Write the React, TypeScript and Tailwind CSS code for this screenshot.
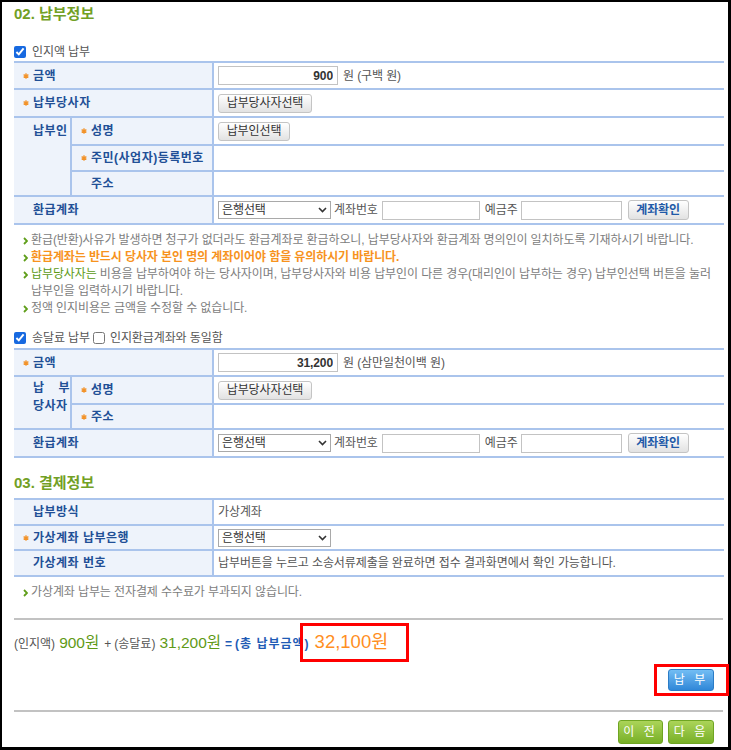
import React from "react";

const line = "border-[#aac4ec]";

function Star() {
  return (
    <svg width="6" height="6" viewBox="0 0 6 6" className="shrink-0">
      <path d="M3 0.3v5.4M0.6 1.6l4.8 2.8M0.6 4.4l4.8-2.8" stroke="#f2932a" strokeWidth="1.3" />
    </svg>
  );
}

function Arrow() {
  return (
    <svg width="5" height="8" viewBox="0 0 5 8" className="mt-[5px] mr-[3px] shrink-0">
      <path d="M1 1l3 3-3 3" fill="none" stroke="#5f9e1a" strokeWidth="1.8" />
    </svg>
  );
}

function Label({ children, star = false, span = false }: { children: React.ReactNode; star?: boolean; span?: boolean }) {
  return (
    <div
      className={`${span ? "col-span-2" : ""} flex items-center border-r-2 border-b-2 ${line} bg-[#eef3fb] pl-[9px] text-[12px] font-bold tracking-[0.5px] text-[#214f96]`}
    >
      <span className="flex w-[10px] items-center">{star && <Star />}</span>
      <span>{children}</span>
    </div>
  );
}

function Value({ children }: { children?: React.ReactNode }) {
  return (
    <div className={`flex items-center border-b-2 ${line} pl-[4px] text-[12px] tracking-[-0.1px] text-[#555]`}>{children}</div>
  );
}

function Amount({ value }: { value: string }) {
  return (
    <input
      readOnly
      value={value}
      className="h-[19px] w-[120px] border border-[#c3c3c3] bg-white px-[4px] text-right text-[12px] font-bold text-[#333] outline-none"
    />
  );
}

function Box({ w }: { w: string }) {
  return <input readOnly className={`${w} h-[19px] border border-[#c3c3c3] bg-white outline-none`} />;
}

function GrayBtn({ children, w, blue = false }: { children: React.ReactNode; w: string; blue?: boolean }) {
  return (
    <button
      type="button"
      className={`${w} h-[19px] rounded-[3px] border border-[#c4c4c4] bg-linear-to-b from-white to-[#e2e2e2] text-[12px] leading-none ${
        blue ? "font-bold text-[#1f5aa8]" : "text-[#333]"
      }`}
    >
      {children}
    </button>
  );
}

function BankSelect() {
  return (
    <div className="flex h-[18px] w-[113px] items-center justify-between border border-[#a9a9a9] bg-white pr-[3px] pl-[3px] text-[12px] text-[#333]">
      <span>은행선택</span>
      <svg width="9" height="6" viewBox="0 0 9 6">
        <path d="M1 1l3.5 3.5L8 1" fill="none" stroke="#333" strokeWidth="1.6" />
      </svg>
    </div>
  );
}

function RefundRow() {
  return (
    <>
      <Label span>환급계좌</Label>
      <Value>
        <BankSelect />
        <span className="ml-[3px]">계좌번호</span>
        <Box w="ml-[4px] w-[98px]" />
        <span className="ml-[5px]">예금주</span>
        <Box w="ml-[3px] w-[101px]" />
        <span className="ml-[6px] flex">
          <GrayBtn w="w-[61px] h-[20px]" blue>
            계좌확인
          </GrayBtn>
        </span>
      </Value>
    </>
  );
}

function SectionTitle({ children, className = "" }: { children: React.ReactNode; className?: string }) {
  return <div className={`flex h-[24px] items-center text-[15px] font-bold text-[#72a025] ${className}`}>{children}</div>;
}

export default function App() {
  return (
    <div className="relative h-[750px] w-[731px] border-t-2 border-r-[3px] border-b-[3px] border-l-2 border-black bg-white pr-[4px] pl-[12px] font-['Liberation_Sans','Noto_Sans_CJK_KR',sans-serif]">
      <SectionTitle>02. 납부정보</SectionTitle>

      {/* 인지액 */}
      <div className="mt-[18px] mb-[1px] flex h-[16px] items-center text-[12px] tracking-[-0.1px] text-[#555]">
        <input type="checkbox" defaultChecked className="m-0 h-[12px] w-[12px] accent-[#1769e0]" />
        <span className="ml-[6px]">인지액 납부</span>
      </div>

      <div className={`grid grid-cols-[58px_142px_510px] grid-rows-[27px_28px_28px_26px_25px_28px] border-t-2 ${line}`}>
        <Label span star>
          금액
        </Label>
        <Value>
          <Amount value="900" />
          <span className="ml-[5px]">원 (구백 원)</span>
        </Value>

        <Label span star>
          납부당사자
        </Label>
        <Value>
          <GrayBtn w="w-[94px]">납부당사자선택</GrayBtn>
        </Value>

        <div
          className={`row-span-3 border-r-2 border-b-2 ${line} bg-[#eef3fb] pt-[5px] pl-[19px] text-[12px] leading-[17px] font-bold tracking-[0.5px] text-[#214f96]`}
        >
          납부인
        </div>
        <Label star>성명</Label>
        <Value>
          <GrayBtn w="w-[72px]">납부인선택</GrayBtn>
        </Value>
        <Label star>주민(사업자)등록번호</Label>
        <Value />
        <Label>주소</Label>
        <Value />

        <RefundRow />
      </div>

      {/* notes */}
      <div className="mt-[7px] pl-[9px] text-[12px] leading-[17px] tracking-[-0.1px] whitespace-nowrap text-[#7d7d7d]">
        <div className="flex">
          <Arrow />
          <span>환급(반환)사유가 발생하면 청구가 없더라도 환급계좌로 환급하오니, 납부당사자와 환급계좌 명의인이 일치하도록 기재하시기 바랍니다.</span>
        </div>
        <div className="flex">
          <Arrow />
          <span className="font-bold text-[#f7931e]">환급계좌는 반드시 당사자 본인 명의 계좌이어야 함을 유의하시기 바랍니다.</span>
        </div>
        <div className="flex">
          <Arrow />
          <span>
            <span className="text-[#5c9a16]">납부당사자는</span> 비용을 납부하여야 하는 당사자이며, 납부당사자와 비용 납부인이 다른 경우(대리인이 납부하는 경우) 납부인선택 버튼을 눌러
            <br />
            납부인을 입력하시기 바랍니다.
          </span>
        </div>
        <div className="flex">
          <Arrow />
          <span>정액 인지비용은 금액을 수정할 수 없습니다.</span>
        </div>
      </div>

      {/* 송달료 */}
      <div className="mt-[13px] mb-[2px] flex h-[16px] items-center text-[12px] tracking-[-0.1px] text-[#555]">
        <input type="checkbox" defaultChecked className="m-0 h-[12px] w-[12px] accent-[#1769e0]" />
        <span className="ml-[6px]">송달료 납부</span>
        <input type="checkbox" className="m-0 ml-[3px] h-[12px] w-[12px]" />
        <span className="ml-[5px]">인지환급계좌와 동일함</span>
      </div>

      <div className={`grid grid-cols-[58px_142px_510px] grid-rows-[27px_28px_25px_28px] border-t-2 ${line}`}>
        <Label span star>
          금액
        </Label>
        <Value>
          <Amount value="31,200" />
          <span className="ml-[5px]">원 (삼만일천이백 원)</span>
        </Value>

        <div
          className={`row-span-2 border-r-2 border-b-2 ${line} bg-[#eef3fb] pt-[2px] pl-[19px] text-[12px] leading-[18px] font-bold tracking-[0.5px] text-[#214f96]`}
        >
          <div className="w-[37px]">
            <div className="flex justify-between">
              <span>납</span>
              <span>부</span>
            </div>
            <div>당사자</div>
          </div>
        </div>
        <Label star>성명</Label>
        <Value>
          <GrayBtn w="w-[94px]">납부당사자선택</GrayBtn>
        </Value>
        <Label star>주소</Label>
        <Value />

        <RefundRow />
      </div>

      <SectionTitle className="mt-[13px] mb-[3px]">03. 결제정보</SectionTitle>

      <div className={`grid grid-cols-[58px_142px_510px] grid-rows-[26px_25px_26px] border-t-2 ${line}`}>
        <Label span>납부방식</Label>
        <Value>가상계좌</Value>
        <Label span star>
          가상계좌 납부은행
        </Label>
        <Value>
          <BankSelect />
        </Value>
        <Label span>가상계좌 번호</Label>
        <Value>납부버튼을 누르고 소송서류제출을 완료하면 접수 결과화면에서 확인 가능합니다.</Value>
      </div>

      <div className="mt-[7px] flex pl-[9px] text-[12px] leading-[17px] tracking-[-0.1px] text-[#7d7d7d]">
        <Arrow />
        <span>가상계좌 납부는 전자결제 수수료가 부과되지 않습니다.</span>
      </div>

      <div className="mt-[17px] mr-[1px] h-[2px] bg-[#c2c2c2]" />

      {/* total */}
      <div className="mt-[10px] flex h-[24px] items-center">
        <div className="flex items-baseline whitespace-nowrap">
          <span className="text-[12px] text-[#555]">(인지액)</span>
          <span className="ml-[4px] text-[15.5px] text-[#5f9a16]">900원</span>
          <span className="ml-[5px] text-[12px] text-[#555]">+</span>
          <span className="ml-[3px] text-[12px] text-[#555]">(송달료)</span>
          <span className="ml-[4px] text-[15.5px] text-[#5f9a16]">31,200원</span>
          <span className="ml-[4px] text-[12px] font-bold text-[#1f5bb5]">=</span>
          <span className="ml-[3px] text-[12px] font-bold tracking-[1px] text-[#1f5bb5]">(총 납부금액)</span>
          <span className="ml-[5px] text-[18.5px] text-[#ff8f1f]">32,100원</span>
        </div>
      </div>

      <div className="mt-[15px] flex justify-end pr-[10px]">
        <button
          type="button"
          className="h-[22px] w-[46px] rounded-[3px] border border-[#2b7cc6] bg-linear-to-b from-[#72bdf4] to-[#2f87d8] text-[12px] tracking-[3px] text-white"
        >
          납 부
        </button>
      </div>

      <div className="mt-[19px] mr-[1px] h-[2px] bg-[#c2c2c2]" />

      <div className="mt-[8px] flex justify-end gap-[5px] pr-[10px]">
        <button
          type="button"
          className="h-[24px] w-[45px] rounded-[3px] border border-[#6fa522] bg-linear-to-b from-[#abd458] to-[#78b026] text-[12px] tracking-[3px] text-white"
        >
          이 전
        </button>
        <button
          type="button"
          className="h-[24px] w-[46px] rounded-[3px] border border-[#6fa522] bg-linear-to-b from-[#abd458] to-[#78b026] text-[12px] tracking-[3px] text-white"
        >
          다 음
        </button>
      </div>

      {/* red highlight boxes */}
      <div className="pointer-events-none absolute top-[621px] left-[298px] h-[39px] w-[109px] border-[3px] border-[#ff0000]" />
      <div className="pointer-events-none absolute top-[662px] left-[652px] h-[32px] w-[75px] border-[3px] border-[#ff0000]" />
    </div>
  );
}
